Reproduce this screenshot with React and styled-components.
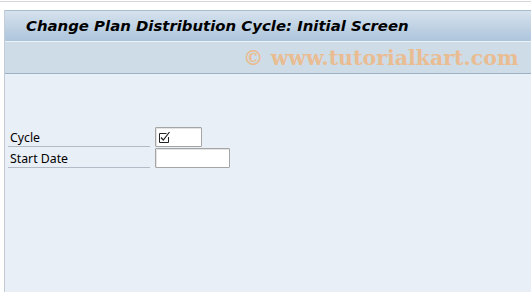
import React from "react";
import styled, { createGlobalStyle } from "styled-components";

const GlobalStyle = createGlobalStyle`
  html, body {
    margin: 0;
    padding: 0;
    background: #ffffff;
  }
  * {
    box-sizing: border-box;
  }
`;

const Page = styled.div`
  width: 531px;
  height: 292px;
  display: flex;
  flex-direction: column;
  overflow: hidden;
  font-family: "DejaVu Sans", "Liberation Sans", sans-serif;
`;

const TopStrip = styled.div`
  height: 10px;
  padding-top: 1px;
  background: #ffffff;

  &::before {
    content: "";
    display: block;
    height: 1px;
    background: #d4d8dc;
  }
`;

const Frame = styled.div`
  flex: 1;
  margin-left: 4px;
  border-left: 1px solid #c3ccd6;
  background: #e9eff7;
  display: flex;
  flex-direction: column;
`;

const TitleBar = styled.div`
  height: 31px;
  border-top: 1px solid #a9bdd1;
  background: linear-gradient(to bottom, #d6e2ee 0%, #c1d3e4 50%, #adc5dc 100%);
  display: flex;
  align-items: center;
  padding-left: 21px;
`;

const Title = styled.h1`
  margin: 0;
  font-family: "DejaVu Sans", Verdana, sans-serif;
  font-size: 14.9px;
  font-weight: bold;
  font-style: italic;
  color: #000000;
`;

const SubBar = styled.div`
  height: 33px;
  border-top: 1px solid #eef3f8;
  border-bottom: 1px solid #9eb0c3;
  background: #cedce8;
  display: flex;
  align-items: center;
  padding-left: 238px;
`;

const Watermark = styled.span`
  font-family: "DejaVu Serif", Georgia, serif;
  font-size: 20.5px;
  font-weight: bold;
  color: #e9bc92;
`;

const Body = styled.div`
  padding: 53px 0 0 3px;
  display: flex;
  flex-direction: column;
  gap: 1px;
`;

const Row = styled.div`
  display: flex;
  align-items: stretch;
  height: 20px;
`;

const Label = styled.div`
  width: 142px;
  padding-left: 2px;
  border-bottom: 1px solid #b3bcc6;
  font-family: "Noto Sans", "DejaVu Sans", sans-serif;
  font-size: 12.3px;
  color: #000000;
  display: flex;
  align-items: center;
  padding-top: 1px;
`;

const Field = styled.div`
  margin-left: 5px;
  width: ${(p) => p.$width}px;
  height: 20px;
  border: 1px solid #a5a5a5;
  border-radius: 1px;
  background: #ffffff;
  box-shadow: inset 1px 1px 0 #e4e4e4;
  display: flex;
  align-items: center;
  padding-left: 2px;
`;

const CheckIcon = () => (
  <svg width="13" height="12" viewBox="0 0 13 12">
    <path d="M8.5 2.5 H1.5 V11.5 H10.5 V6" fill="none" stroke="#222" strokeWidth="1" />
    <path d="M3 6.5 L5.3 9 L11.5 1" fill="none" stroke="#222" strokeWidth="1.2" />
  </svg>
);

const App = () => {
  return (
    <Page>
      <GlobalStyle />
      <TopStrip />
      <Frame>
        <TitleBar>
          <Title>Change Plan Distribution Cycle: Initial Screen</Title>
        </TitleBar>
        <SubBar>
          <Watermark>© www.tutorialkart.com</Watermark>
        </SubBar>
        <Body>
          <Row>
            <Label>Cycle</Label>
            <Field $width={47}>
              <CheckIcon />
            </Field>
          </Row>
          <Row>
            <Label>Start Date</Label>
            <Field $width={75} />
          </Row>
        </Body>
      </Frame>
    </Page>
  );
};

export default App;
